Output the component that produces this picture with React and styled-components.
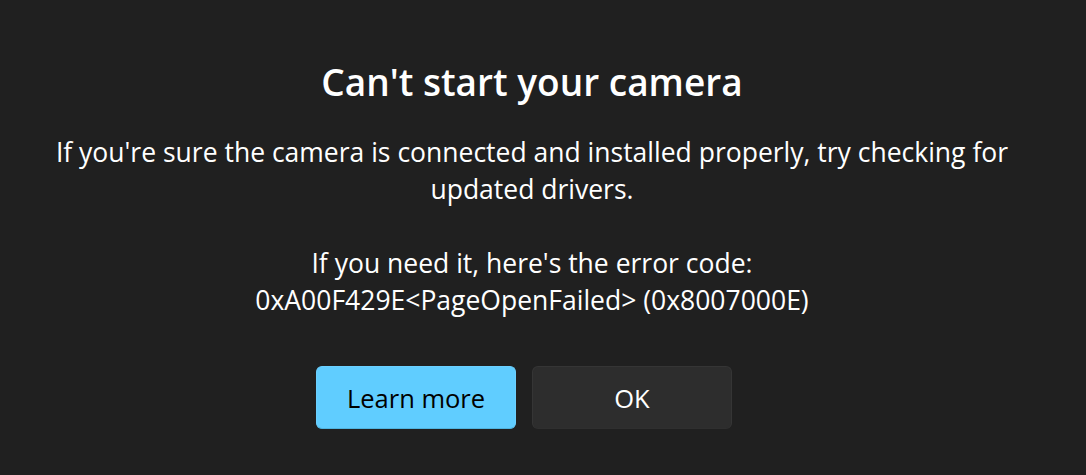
import React from "react";
import styled, { createGlobalStyle } from "styled-components";

const GlobalStyle = createGlobalStyle`
  html, body {
    margin: 0;
    padding: 0;
    background: #202020;
  }
  body {
    font-family: "Open Sans", "Noto Sans", sans-serif;
    color: #ffffff;
  }
`;

const Screen = styled.div`
  width: 1086px;
  height: 475px;
  box-sizing: border-box;
  padding: 60px 22px 0 0;
  display: flex;
  flex-direction: column;
  align-items: center;
`;

const Title = styled.h1`
  margin: 0;
  font-size: 37px;
  line-height: 44px;
  font-weight: 600;
`;

const Message = styled.p`
  margin: ${(p) => p.$top}px 0 0;
  width: 1000px;
  font-size: 26.5px;
  line-height: 36.5px;
  text-align: center;
`;

const Actions = styled.div`
  display: flex;
  gap: 16px;
  margin: 48px 16px 0 0;
`;

const Button = styled.button`
  width: 200px;
  height: 63px;
  box-sizing: border-box;
  border-radius: 6px;
  font-family: inherit;
  font-size: 25.5px;
  cursor: pointer;
  background: ${(p) => (p.$primary ? "#60cdff" : "#2d2d2d")};
  color: ${(p) => (p.$primary ? "#000000" : "#ffffff")};
  border: 1px solid ${(p) => (p.$primary ? "#6bd0ff" : "#353535")};
  border-bottom-color: ${(p) => (p.$primary ? "#4fb4e0" : "#2f2f2f")};
`;

export default function App() {
  return (
    <>
      <GlobalStyle />
      <Screen>
        <Title>Can't start your camera</Title>
        <Message $top={30}>
          If you're sure the camera is connected and installed properly, try
          checking for updated drivers.
        </Message>
        <Message $top={38}>
          If you need it, here's the error code:
          <br />
          0xA00F429E&lt;PageOpenFailed&gt; (0x8007000E)
        </Message>
        <Actions>
          <Button $primary>Learn more</Button>
          <Button>OK</Button>
        </Actions>
      </Screen>
    </>
  );
}
